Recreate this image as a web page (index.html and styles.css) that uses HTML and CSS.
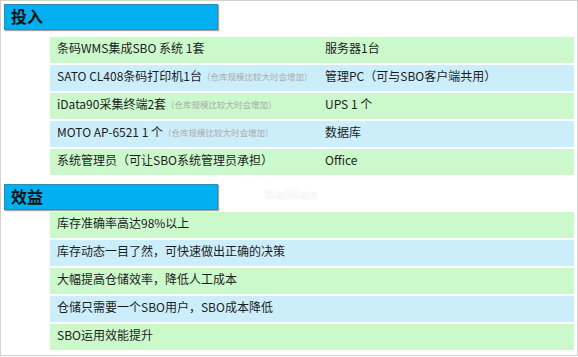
FILE: index.html
```html
<!DOCTYPE html>
<html lang="zh">
<head>
<meta charset="utf-8">
<link rel="stylesheet" href="styles.css">
</head>
<body>
<div class="frame">
  <div class="heading">投入</div>
  <div class="rows rows-in">
    <div class="row green"><span class="cell">条码WMS集成SBO 系统 1套</span><span class="cell">服务器1台</span></div>
    <div class="row blue"><span class="cell">SATO CL408条码打印机1台<small class="note">（仓库规模比较大时会增加）</small></span><span class="cell">管理PC（可与SBO客户端共用）</span></div>
    <div class="row green"><span class="cell">iData90采集终端2套<small class="note">（仓库规模比较大时会增加）</small></span><span class="cell">UPS 1 个</span></div>
    <div class="row blue"><span class="cell">MOTO AP-6521 1 个<small class="note">（仓库规模比较大时会增加）</small></span><span class="cell">数据库</span></div>
    <div class="row green"><span class="cell">系统管理员（可让SBO系统管理员承担）</span><span class="cell">Office</span></div>
  </div>
  <div class="heading heading-2">效益</div>
  <div class="rows rows-out">
    <div class="row green"><span class="cell">库存准确率高达98%以上</span></div>
    <div class="row blue"><span class="cell">库存动态一目了然，可快速做出正确的决策</span></div>
    <div class="row green"><span class="cell">大幅提高仓储效率，降低人工成本</span></div>
    <div class="row blue"><span class="cell">仓储只需要一个SBO用户，SBO成本降低</span></div>
    <div class="row green"><span class="cell">SBO运用效能提升</span></div>
  </div>
  <div class="watermark">Bailian</div>
</div>
</body>
</html>
```
FILE: styles.css
```css
* { box-sizing: border-box; }
html, body { margin: 0; padding: 0; background: #fff; }
body {
  font-family: "Noto Sans CJK SC", "Noto Sans", sans-serif;
  color: #1c1c1c;
}
.frame {
  position: relative;
  width: 578px;
  height: 356px;
  border: 1px solid #d2d2d2;
  padding: 3px 0 0 2px;
}
.heading {
  width: 214px;
  height: 26px;
  margin-left: 1px;
  background: #00b0f0;
  border: 1px solid #2f8db4;
  box-shadow: 1px 1px 1px rgba(0, 0, 0, 0.35);
  font-size: 16px;
  font-weight: 700;
  line-height: 23px;
  padding-left: 6px;
  color: #111;
}
.heading-2 { margin-top: 9px; }
.rows {
  margin-left: 47px;
  width: 524px;
  display: flex;
  flex-direction: column;
  gap: 2px;
}
.rows-in { margin-top: 7px; }
.rows-out { margin-top: 2px; }
.row {
  height: 26px;
  display: grid;
  grid-template-columns: 268px 1fr;
  font-size: 12px;
  line-height: 21px;
}
.green { background: #ccf9cc; }
.blue { background: #cceefb; }
.cell {
  padding-left: 7px;
  white-space: nowrap;
}
.note {
  font-size: 8.5px;
  color: #ababab;
  vertical-align: 1px;
}
.watermark {
  position: absolute;
  left: 264px;
  top: 186px;
  font-family: "DejaVu Sans", sans-serif;
  font-weight: 700;
  font-size: 13px;
  color: #fbfbfb;
  text-shadow: 0 0 1px #dedede;
  letter-spacing: 0.5px;
}
```
